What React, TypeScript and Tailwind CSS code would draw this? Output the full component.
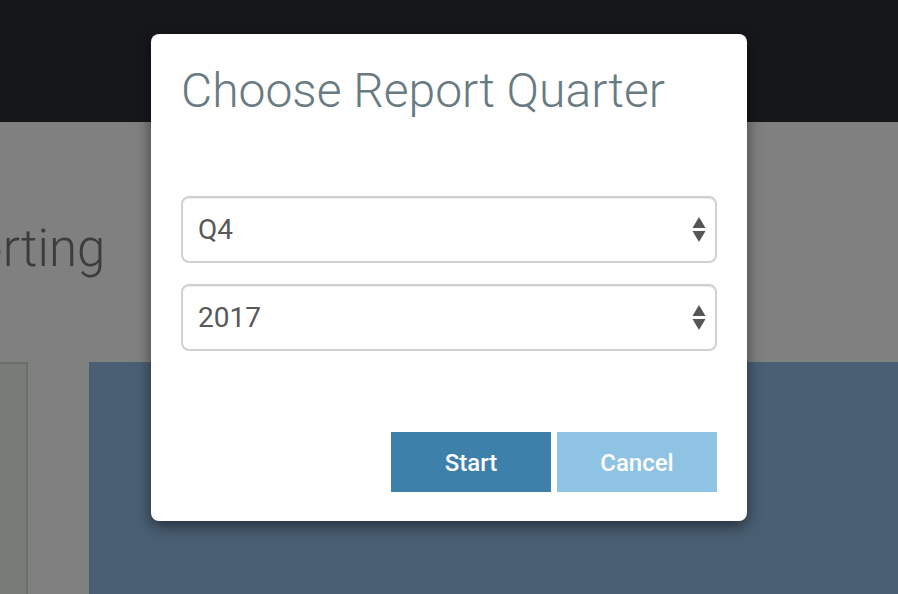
import React from 'react';

const font = { fontFamily: 'Roboto, "Liberation Sans", sans-serif' };

function SelectBox({ value }: { value: string }) {
  return (
    <div className="flex items-center justify-between h-[67px] rounded-lg border-2 border-[#d0d0d0] bg-white pl-[15px] pr-[9px] shadow-[inset_0_1px_1px_rgba(0,0,0,0.075)]">
      <span className="text-[28px] text-[#585858] leading-none">{value}</span>
      <svg width="14" height="26" viewBox="0 0 14 26" className="text-[#555]">
        <path d="M7 0 L13.5 11 L0.5 11 Z" fill="currentColor" />
        <path d="M0.5 14 L13.5 14 L7 25 Z" fill="currentColor" />
      </svg>
    </div>
  );
}

export default function App() {
  return (
    <div className="relative w-[898px] h-[594px] overflow-hidden bg-[#808080]" style={font}>
      {/* page under the overlay */}
      <div className="h-[122px] bg-[#16171b]" />
      <div className="h-[240px] overflow-hidden pt-[101px]">
        <h1 className="ml-[-113px] text-[51px] font-light leading-none text-[#3c3c3c] whitespace-nowrap">
          Reporting
        </h1>
      </div>
      <div className="flex gap-[61px] h-[232px]">
        <div className="w-[28px] border-t-2 border-r-2 border-[#6a6f6a] bg-[#787c78]" />
        <div className="flex-1 bg-[#4a5f73]" />
      </div>

      {/* modal */}
      <div className="absolute inset-0 flex justify-center pt-[34px]">
        <div className="w-[596px] h-[487px] rounded-lg bg-white px-[30px] pt-[33px] pb-[29px] flex flex-col shadow-[0_5px_15px_rgba(0,0,0,0.5)]">
          <h2 className="text-[48px] font-light leading-none text-[#687a82] whitespace-nowrap">
            Choose Report Quarter
          </h2>
          <div className="mt-[81px] flex flex-col gap-[21px]">
            <SelectBox value="Q4" />
            <SelectBox value="2017" />
          </div>
          <div className="mt-auto flex justify-end gap-[6px]">
            <button className="w-[160px] h-[60px] pt-[2px] bg-[#3d80aa] text-white text-[24px] font-medium">
              Start
            </button>
            <button className="w-[160px] h-[60px] pt-[2px] bg-[#8fc3e3] text-white text-[24px] font-medium">
              Cancel
            </button>
          </div>
        </div>
      </div>
    </div>
  );
}
